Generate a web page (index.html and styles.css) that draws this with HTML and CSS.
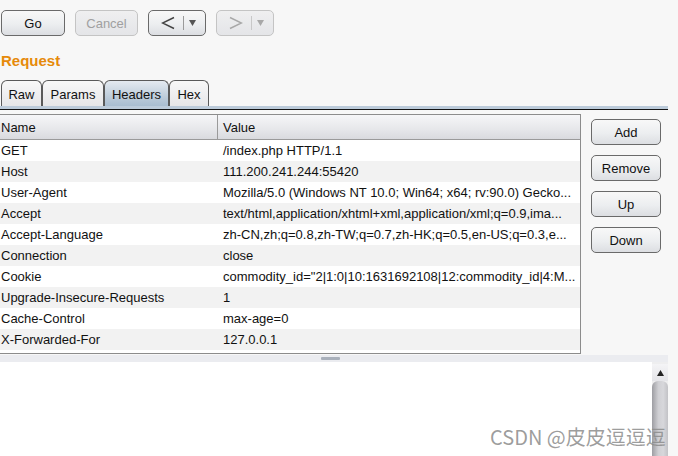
FILE: index.html
```html
<!DOCTYPE html>
<html>
<head>
<meta charset="utf-8">
<link rel="stylesheet" href="styles.css">
</head>
<body>
<div class="page">
  <div class="toolbar">
    <div class="btn w-go">Go</div>
    <div class="btn w-cancel disabled">Cancel</div>
    <div class="btn w-nav nav">
      <svg class="chev" width="14" height="14" viewBox="0 0 14 14"><polyline points="13,1.5 1.5,7 13,12.5" fill="none" stroke="#444" stroke-width="1.4"/></svg>
      <span class="sep"></span>
      <svg class="tri" width="7" height="6" viewBox="0 0 7 6"><polygon points="0,0 7,0 3.5,6" fill="#555"/></svg>
    </div>
    <div class="btn w-nav nav disabled">
      <svg class="chev" width="14" height="14" viewBox="0 0 14 14"><polyline points="1,1.5 12.5,7 1,12.5" fill="none" stroke="#a8a8a8" stroke-width="1.4"/></svg>
      <span class="sep"></span>
      <svg class="tri" width="7" height="6" viewBox="0 0 7 6"><polygon points="0,0 7,0 3.5,6" fill="#a8a8a8"/></svg>
    </div>
  </div>

  <div class="title">Request</div>

  <div class="tabs">
    <div class="tab t-raw">Raw</div>
    <div class="tab t-params">Params</div>
    <div class="tab t-headers active">Headers</div>
    <div class="tab t-hex">Hex</div>
  </div>
  <div class="tabline"></div>

  <div class="main">
    <div class="table">
      <div class="thead">
        <div class="c-name">Name</div>
        <div class="c-value">Value</div>
      </div>
      <div class="row"><div class="c-name">GET</div><div class="c-value">/index.php HTTP/1.1</div></div>
      <div class="row alt"><div class="c-name">Host</div><div class="c-value">111.200.241.244:55420</div></div>
      <div class="row"><div class="c-name">User-Agent</div><div class="c-value">Mozilla/5.0 (Windows NT 10.0; Win64; x64; rv:90.0) Gecko...</div></div>
      <div class="row alt"><div class="c-name">Accept</div><div class="c-value">text/html,application/xhtml+xml,application/xml;q=0.9,ima...</div></div>
      <div class="row"><div class="c-name">Accept-Language</div><div class="c-value">zh-CN,zh;q=0.8,zh-TW;q=0.7,zh-HK;q=0.5,en-US;q=0.3,e...</div></div>
      <div class="row alt"><div class="c-name">Connection</div><div class="c-value">close</div></div>
      <div class="row"><div class="c-name">Cookie</div><div class="c-value">commodity_id="2|1:0|10:1631692108|12:commodity_id|4:M...</div></div>
      <div class="row alt"><div class="c-name">Upgrade-Insecure-Requests</div><div class="c-value">1</div></div>
      <div class="row"><div class="c-name">Cache-Control</div><div class="c-value">max-age=0</div></div>
      <div class="row alt"><div class="c-name">X-Forwarded-For</div><div class="c-value">127.0.0.1</div></div>
    </div>
    <div class="side">
      <div class="btn w-side">Add</div>
      <div class="btn w-side">Remove</div>
      <div class="btn w-side">Up</div>
      <div class="btn w-side">Down</div>
    </div>
  </div>

  <div class="splitter"><span class="grip"></span></div>

  <div class="bottom">
    <div class="textarea"></div>
    <div class="scrollbar">
      <div class="sb-up"><svg width="7" height="6" viewBox="0 0 7 6"><polygon points="3.5,0 7,6 0,6" fill="#222"/></svg></div>
      <div class="sb-thumb"></div>
    </div>
  </div>

  <div class="watermark">CSDN @皮皮逗逗逗</div>
</div>
</body>
</html>
```

FILE: styles.css
```css
* { box-sizing: border-box; }

html, body {
  margin: 0;
  padding: 0;
}

body {
  width: 678px;
  height: 456px;
  overflow: hidden;
  background: #f7f7f7;
  font-family: "Liberation Sans", Arial, sans-serif;
  font-size: 13px;
  color: #111;
}

.page {
  position: relative;
  width: 678px;
  height: 456px;
}

.toolbar {
  display: flex;
  gap: 10px;
  padding: 10px 0 0 1px;
}

.btn {
  height: 26px;
  border: 1px solid #6a6a6a;
  border-radius: 5px;
  background: linear-gradient(#f8f8f8, #eceef0 55%, #dcdee2);
  display: flex;
  align-items: center;
  justify-content: center;
  font-size: 13px;
  color: #111;
}

.btn.disabled {
  border-color: #c4c4c4;
  background: linear-gradient(#efeff0, #e4e5e8);
  color: #a0a0a0;
}

.w-go { width: 64px; }
.w-cancel { width: 63px; }
.w-nav { width: 58px; }

.nav {
  justify-content: flex-start;
  padding-left: 12px;
}

.nav .chev { display: block; }

.nav .sep {
  width: 1px;
  height: 14px;
  background: #9a9a9a;
  margin-left: 8px;
}

.nav.disabled .sep { background: #c8c8c8; }

.nav .tri {
  display: block;
  margin-left: 5px;
}

.title {
  margin: 16px 0 0 1px;
  font-size: 15px;
  line-height: 17px;
  font-weight: bold;
  color: #e68a0a;
}

.tabs {
  display: flex;
  margin-top: 11px;
  padding-left: 1px;
  height: 26px;
}

.tab {
  height: 26px;
  border: 1px solid #5a5a5a;
  border-bottom: none;
  border-radius: 6px 6px 0 0;
  background: linear-gradient(#f8f8f8, #e6e6e8);
  display: flex;
  align-items: center;
  justify-content: center;
  font-size: 13px;
  padding-top: 1px;
}

.tab.active {
  background: linear-gradient(#e4eaf0, #b9c9d8 70%, #a9bdd0);
}

.t-raw { width: 41px; }
.t-params { width: 62px; }
.t-headers { width: 65px; }
.t-hex { width: 40px; }

.tabline {
  width: 668px;
  height: 4px;
  background: #bccbda;
  border-bottom: 1px solid #141414;
}

.main {
  display: flex;
  margin-top: 4px;
}

.table {
  width: 581px;
  height: 240px;
  border: 1px solid #8c8c8c;
  border-left: none;
  background: #fff;
}

.thead {
  display: flex;
  height: 25px;
  background: linear-gradient(#f6f6f8, #e6e7ea 60%, #d9dade);
  border-bottom: 1px solid #9a9a9a;
  align-items: center;
}

.thead .c-name {
  border-right: 1px solid #9a9a9a;
  height: 24px;
  display: flex;
  align-items: center;
}

.row {
  display: flex;
  height: 21px;
  align-items: center;
  background: #fff;
}

.row.alt { background: #f2f2f2; }

.c-name {
  width: 218px;
  padding-left: 1px;
  white-space: nowrap;
  overflow: hidden;
}

.c-value {
  padding-left: 5px;
  white-space: nowrap;
  overflow: hidden;
  flex: 1;
}

.side {
  display: flex;
  flex-direction: column;
  gap: 10px;
  margin-left: 10px;
  padding-top: 5px;
}

.w-side { width: 70px; }

.splitter {
  width: 668px;
  height: 7px;
  margin-top: 1px;
  background: #ebecf0;
  display: flex;
  justify-content: center;
  padding-top: 2px;
}

.grip {
  display: block;
  width: 19px;
  height: 3px;
  background: #a9b0bb;
  border-radius: 1px;
  margin-left: -8px;
}

.bottom {
  display: flex;
  width: 668px;
  height: 95px;
}

.textarea {
  flex: 1;
  background: #fff;
}

.scrollbar {
  width: 16px;
  background: #eeeeef;
  display: flex;
  flex-direction: column;
}

.sb-up {
  height: 17px;
  margin-top: 2px;
  background: linear-gradient(#f4f4f6, #e4e4e8);
  display: flex;
  align-items: center;
  justify-content: center;
}

.sb-thumb {
  flex: 1;
  border-radius: 6px 6px 0 0;
  background: linear-gradient(90deg, #9e9ea3, #cfcfd3 40%, #d7d7db 70%, #c2c2c6);
}

.watermark {
  position: absolute;
  left: 490px;
  top: 426px;
  font-family: "Noto Sans CJK SC", "Noto Sans", sans-serif;
  font-size: 20px;
  line-height: 22px;
  color: rgba(140, 140, 140, 0.85);
  white-space: nowrap;
}
```
